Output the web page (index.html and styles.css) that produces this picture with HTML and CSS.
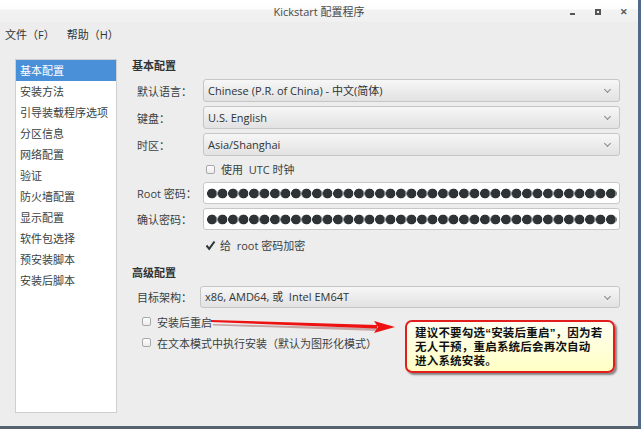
FILE: index.html
```html
<!DOCTYPE html>
<html lang="zh-CN">
  <head>
    <meta charset="UTF-8" />
    <title>Kickstart 配置程序</title>
    <link rel="stylesheet" href="styles.css">
  </head>
  <body>
    <div class="window">
      <div class="titlebar">
        <span class="title">Kickstart 配置程序</span>
        <div class="win-btns">
          <span class="win-min"></span>
          <span class="win-max"></span>
          <span class="win-close">✕</span>
        </div>
      </div>

      <div class="menubar">
        <span>文件（F）</span>
        <span>帮助（H）</span>
      </div>

      <div class="content">
        <ul class="sidebar">
          <li class="active">基本配置</li>
          <li>安装方法</li>
          <li>引导装载程序选项</li>
          <li>分区信息</li>
          <li>网络配置</li>
          <li>验证</li>
          <li>防火墙配置</li>
          <li>显示配置</li>
          <li>软件包选择</li>
          <li>预安装脚本</li>
          <li>安装后脚本</li>
        </ul>

        <div class="main">
          <h3>基本配置</h3>
          <div class="form">
            <label>默认语言：</label>
            <div class="combo">Chinese (P.R. of China) - 中文(简体)</div>
            <label>键盘：</label>
            <div class="combo">U.S. English</div>
            <label>时区：</label>
            <div class="combo">Asia/Shanghai</div>
            <span></span>
            <div class="check-row utc"><span class="box"></span>使用&nbsp; UTC 时钟</div>
            <label>Root 密码：</label>
            <div class="entry"><span class="dots"></span></div>
            <label>确认密码：</label>
            <div class="entry"><span class="dots"></span></div>
            <span></span>
            <div class="check-row">
              <svg class="tick" width="11" height="11" viewBox="0 0 11 11"><path d="M1.5 5.5 L4.2 8.8 L9.5 1.5" fill="none" stroke="#2e3436" stroke-width="2"/></svg>给&nbsp; root 密码加密
            </div>
          </div>

          <h3 class="adv">高级配置</h3>
          <div class="form arch">
            <label>目标架构：</label>
            <div class="combo">x86, AMD64, 或&nbsp; Intel EM64T</div>
          </div>
          <div class="check-row opt first"><span class="box"></span>安装后重启</div>
          <div class="check-row opt"><span class="box"></span>在文本模式中执行安装（默认为图形化模式）</div>
        </div>
      </div>

      <svg class="arrow" width="200" height="30" viewBox="0 0 200 30">
        <path d="M7 12.5 L172 16.5 L172 19.5 L7 14 Z" fill="#700000" opacity="0.3" transform="translate(1,1.5)"/>
        <path d="M6 10 L172 15 L172 18.5 L6 12 Z" fill="#ee1111"/>
        <path d="M169 11 L190 17 L169 23 L173 17 Z" fill="#ee1111"/>
      </svg>

      <div class="callout">
        <div>建议不要勾选“安装后重启”，因为若</div>
        <div>无人干预，重启系统后会再次自动</div>
        <div>进入系统安装。</div>
      </div>
    </div>
  </body>
</html>
```

FILE: styles.css
```css
* {
  box-sizing: border-box;
}

body {
  margin: 0;
  width: 641px;
  height: 429px;
  overflow: hidden;
  background: #ededed;
  font-family: "Open Sans", "Noto Sans CJK SC", sans-serif;
  font-size: 11px;
  color: #3a3f41;
}

.window {
  position: relative;
  height: 429px;
  border-right: 3px solid #4e6a86;
  border-bottom: 3px solid #56626e;
  background: #ededed;
}

.titlebar {
  height: 22px;
  position: relative;
  background: linear-gradient(#ffffff 0, #fcfcfc 9px, #f2f2f2 10px, #f0f0f0);
  text-align: center;
  line-height: 24px;
}

.title {
  font-size: 11px;
  color: #4a4a4a;
}

.win-btns {
  position: absolute;
  right: 0;
  top: 0;
  display: flex;
  align-items: center;
  height: 24px;
}

.win-min {
  width: 5px;
  height: 2px;
  background: #555;
  margin-top: 4px;
  margin-right: 20px;
}

.win-max {
  width: 6px;
  height: 6px;
  border: 2px solid #555;
  margin-right: 19px;
}

.win-close {
  font-size: 9px;
  font-weight: bold;
  color: #555;
  margin-right: 10px;
}

.menubar {
  height: 24px;
  display: flex;
  gap: 12px;
  padding-left: 5px;
  align-items: center;
  font-size: 11px;
  color: #333;
}

.content {
  display: flex;
  padding: 13px 0 0 15px;
}

.sidebar {
  list-style: none;
  margin: 0;
  padding: 0;
  width: 102px;
  height: 354px;
  background: #fff;
  border: 1px solid #cfcfcf;
}

.sidebar li {
  height: 21px;
  line-height: 21px;
  padding-left: 4px;
  white-space: nowrap;
  color: #3a3f41;
}

.sidebar li.active {
  background: #4a90d9;
  color: #fff;
}

.main {
  margin-left: 15px;
  width: 490px;
}

h3 {
  margin: -1px 0 0;
  height: 16px;
  line-height: 16px;
  font-size: 11px;
  font-weight: bold;
  color: #2e3436;
}

h3.adv {
  margin-top: 9px;
}

.form {
  display: grid;
  grid-template-columns: 66px 417px;
  row-gap: 4px;
  padding-left: 5px;
  margin-top: 5px;
  align-items: center;
}

.form.arch {
  grid-template-columns: 63px 420px;
}

.combo {
  height: 23px;
  line-height: 21px;
  padding-left: 4px;
  border: 1px solid #c6c6c6;
  border-radius: 3px;
  background: linear-gradient(#f7f7f7, #ececec 50%, #e2e2e2);
  color: #2e3436;
  position: relative;
  white-space: nowrap;
}

.arch .combo {
  height: 22px;
  line-height: 20px;
}

.combo::after {
  content: "";
  position: absolute;
  right: 9px;
  top: 7px;
  width: 4px;
  height: 4px;
  border-right: 1px solid #888;
  border-bottom: 1px solid #888;
  transform: rotate(45deg);
}

.entry {
  height: 22px;
  border: 1px solid #c8c8c8;
  border-radius: 3px;
  background: #fff;
  padding: 5px 3px 0 3px;
}

.dots {
  display: block;
  height: 11px;
  width: 410px;
  background: radial-gradient(circle at 5px 5.5px, #2e3436 4.6px, transparent 5.2px);
  background-size: 10.5px 11px;
  background-repeat: repeat-x;
}

.check-row {
  height: 22px;
  display: flex;
  align-items: center;
  padding-left: 3px;
  color: #3a3f41;
}

.check-row.utc {
  height: 18px;
}

.box {
  width: 9px;
  height: 9px;
  border: 1px solid #a8a8a8;
  border-radius: 2px;
  background: linear-gradient(#fdfdfd, #ececec);
  margin-right: 6px;
}

.tick {
  margin-right: 4px;
  margin-left: -1px;
}

.check-row.opt {
  padding-left: 10px;
  height: 21px;
}

.check-row.opt.first {
  margin-top: 3px;
}

.arrow {
  position: absolute;
  left: 205px;
  top: 310px;
}

.callout {
  position: absolute;
  left: 405px;
  top: 320px;
  width: 210px;
  height: 53px;
  padding: 4px 0 0 8px;
  border: 2px solid #e31c1c;
  border-radius: 7px;
  background: linear-gradient(#fffff2, #ffffc4);
  box-shadow: 2px 2px 2px rgba(0, 0, 0, 0.45);
  font-family: "Liberation Sans", "Noto Sans CJK SC", sans-serif;
  font-weight: bold;
  font-size: 11.5px;
  line-height: 14px;
  letter-spacing: 0.2px;
  color: #111;
  white-space: nowrap;
}
```
